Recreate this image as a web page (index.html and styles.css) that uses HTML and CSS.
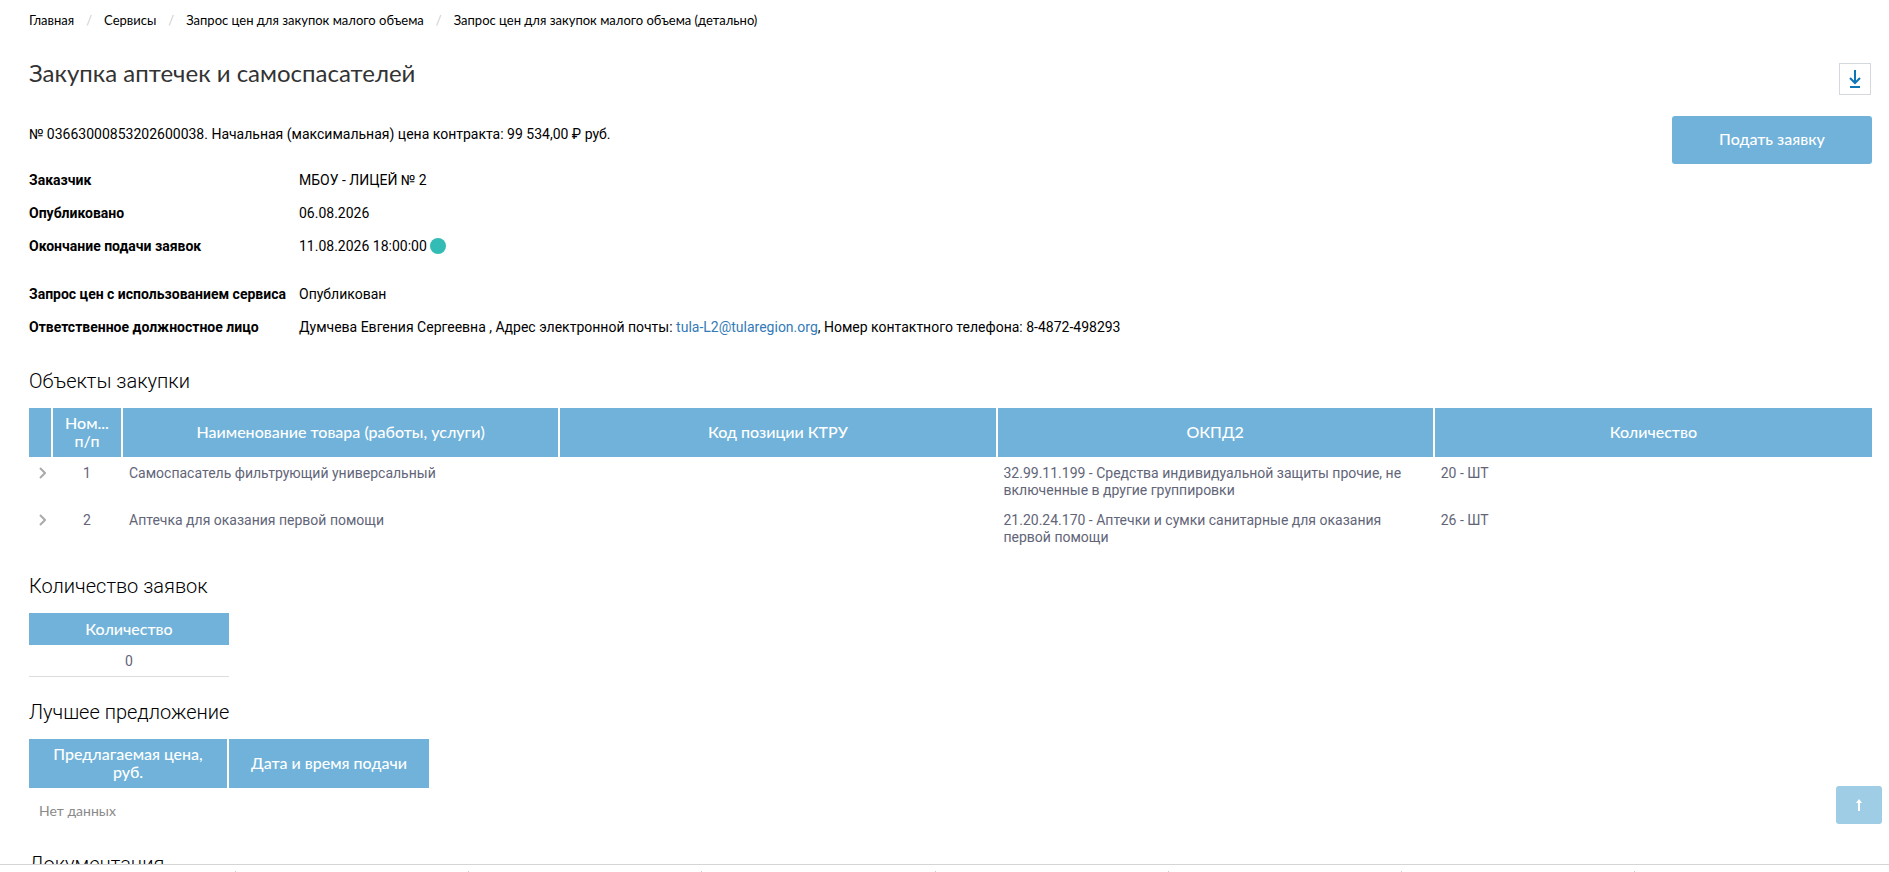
FILE: index.html
```html
<!DOCTYPE html>
<html lang="ru">
<head>
  <meta charset="UTF-8">
  <title>Закупка аптечек и самоспасателей</title>
  <link rel="stylesheet" href="styles.css">
</head>
<body>

<main class="page">
  <nav class="breadcrumbs">
    <a href="#">Главная</a>
    <a href="#">Сервисы</a>
    <a href="#">Запрос цен для закупок малого объема</a>
    <a href="#">Запрос цен для закупок малого объема (детально)</a>
  </nav>

  <header class="title-row">
    <h1>Закупка аптечек и самоспасателей</h1>
    <button class="download-btn" type="button" aria-label="Скачать">
      <svg viewBox="0 0 12 18" width="12" height="18">
        <path d="M6 0v13M1 8l5 5 5-5M1 17h10"/>
      </svg>
    </button>
  </header>

  <div class="summary">
    <div class="info">
      <p class="number">№ 03663000853202600038. Начальная (максимальная) цена контракта: 99 534,00 ₽ руб.</p>
      <dl>
        <dt>Заказчик</dt>
        <dd>МБОУ - ЛИЦЕЙ № 2</dd>
        <dt>Опубликовано</dt>
        <dd>06.08.2026</dd>
        <dt>Окончание подачи заявок</dt>
        <dd>11.08.2026 18:00:00 <span class="status-dot"></span></dd>
      </dl>
      <dl>
        <dt>Запрос цен с использованием сервиса</dt>
        <dd>Опубликован</dd>
        <dt>Ответственное должностное лицо</dt>
        <dd>Думчева Евгения Сергеевна , Адрес электронной почты: <a href="mailto:tula-L2@tularegion.org">tula-L2@tularegion.org</a>, Номер контактного телефона: 8-4872-498293</dd>
      </dl>
    </div>
    <button class="submit-btn" type="button">Подать заявку</button>
  </div>

  <h2>Объекты закупки</h2>
  <table class="grid objects">
    <colgroup>
      <col class="col-expand">
      <col class="col-num">
      <col><col><col><col>
    </colgroup>
    <thead>
      <tr>
        <th></th>
        <th>Ном... п/п</th>
        <th>Наименование товара (работы, услуги)</th>
        <th>Код позиции КТРУ</th>
        <th>ОКПД2</th>
        <th>Количество</th>
      </tr>
    </thead>
    <tbody>
      <tr>
        <td class="expand"><svg viewBox="0 0 7 12" width="7" height="12"><path d="M1 1l5 5-5 5"/></svg></td>
        <td class="center">1</td>
        <td>Самоспасатель фильтрующий универсальный</td>
        <td></td>
        <td>32.99.11.199 - Средства индивидуальной защиты прочие, не включенные в другие группировки</td>
        <td>20 - ШТ</td>
      </tr>
      <tr>
        <td class="expand"><svg viewBox="0 0 7 12" width="7" height="12"><path d="M1 1l5 5-5 5"/></svg></td>
        <td class="center">2</td>
        <td>Аптечка для оказания первой помощи</td>
        <td></td>
        <td>21.20.24.170 - Аптечки и сумки санитарные для оказания первой помощи</td>
        <td>26 - ШТ</td>
      </tr>
    </tbody>
  </table>

  <h2>Количество заявок</h2>
  <table class="grid count">
    <thead>
      <tr><th>Количество</th></tr>
    </thead>
    <tbody>
      <tr><td class="center">0</td></tr>
    </tbody>
  </table>

  <h2>Лучшее предложение</h2>
  <table class="grid offer">
    <thead>
      <tr>
        <th>Предлагаемая цена, руб.</th>
        <th>Дата и время подачи</th>
      </tr>
    </thead>
    <tbody>
      <tr><td class="empty" colspan="2">Нет данных</td></tr>
    </tbody>
  </table>

  <h2>Документация</h2>
</main>

<button class="to-top" type="button" aria-label="Наверх">
  <svg viewBox="0 0 6 12" width="6" height="12"><path d="M2 12V4H0l3-4 3 4H4v8z"/></svg>
</button>

<footer class="bottom-bar">
  <span></span><span></span><span></span><span></span><span></span><span></span><span></span><span></span>
</footer>

</body>
</html>
```
FILE: styles.css
```css
* {
  box-sizing: border-box;
}

body {
  display: flex;
  flex-direction: column;
  height: 100vh;
  margin: 0;
  overflow: hidden;
  background: #fff;
  color: #000;
  font-family: Roboto, "Liberation Sans", sans-serif;
  font-size: 14px;
  line-height: 17px;
}

.page {
  flex: 1;
  min-height: 0;
  overflow: hidden;
  padding: 12px 17px 0 29px;
}

.breadcrumbs {
  display: flex;
  font-family: Lato, sans-serif;
  font-size: 13px;
  line-height: 16px;
}

.breadcrumbs a {
  color: #000;
  text-decoration: none;
}

.breadcrumbs a + a::before {
  content: "/";
  padding: 0 12px;
  color: #ccc;
}

.title-row {
  display: flex;
  justify-content: space-between;
  margin-top: 31px;
}

h1 {
  margin: 0;
  color: #333;
  font-family: Lato, sans-serif;
  font-size: 24px;
  font-weight: 400;
  line-height: 28px;
}

.download-btn {
  display: flex;
  align-items: center;
  justify-content: center;
  width: 32px;
  height: 32px;
  margin: 4px 1px 0 0;
  padding: 0;
  border: 1px solid #d5d8dc;
  background: #fff;
  cursor: pointer;
}

.download-btn svg {
  fill: none;
  stroke: #0f75b5;
  stroke-width: 2;
}

.summary {
  display: flex;
  justify-content: space-between;
  align-items: flex-start;
  margin-top: 21px;
}

.number {
  margin: 10px 0 29px;
}

dl {
  display: grid;
  grid-template-columns: 270px 1fr;
  row-gap: 16px;
  margin: 0 0 31px;
}

dt {
  font-weight: 700;
}

dd {
  margin: 0;
}

dd a {
  color: #337ab7;
  text-decoration: none;
}

.info dl:last-child {
  margin-bottom: 10px;
}

.status-dot {
  display: inline-block;
  width: 16px;
  height: 16px;
  margin: -2px 0 0;
  border-radius: 50%;
  background: #33bbb5;
  vertical-align: middle;
}

.submit-btn {
  width: 200px;
  height: 48px;
  padding: 0 0 3px;
  border: none;
  border-radius: 3px;
  background: #70b2d9;
  color: #fff;
  font-family: Lato, sans-serif;
  font-size: 16px;
  font-weight: 500;
  cursor: pointer;
}

h2 {
  margin: 22px 0 14px;
  font-size: 20px;
  font-weight: 300;
  line-height: 26px;
}

.grid {
  border-collapse: separate;
  border-spacing: 0;
  table-layout: fixed;
}

.grid th {
  padding: 6px 8px 7px;
  border-right: 2px solid #fff;
  background: #70b2d9;
  color: #fff;
  font-family: Lato, sans-serif;
  font-size: 16px;
  font-weight: 500;
  line-height: 18px;
}

.grid td {
  padding: 8px 6px 5px;
  border-right: 2px solid transparent;
  color: #626578;
  vertical-align: top;
}

.grid th:last-child,
.grid td:last-child {
  border-right: none;
}

.grid .center {
  text-align: center;
}

.objects {
  width: 100%;
}

.col-expand {
  width: 24px;
}

.col-num {
  width: 70px;
}

.objects .expand {
  padding: 10px 0 0 10px;
  line-height: 12px;
}

.expand svg {
  display: block;
  fill: none;
  stroke: #aaa;
  stroke-width: 2;
}

.count {
  width: 200px;
}

.count th {
  height: 32px;
}

.count td {
  padding: 8px 6px 6px;
  border-bottom: 1px solid #ddd;
}

.offer {
  width: 400px;
}

.grid .empty {
  padding: 14px 10px 10px;
  color: #8a8a8a;
  font-family: Lato, sans-serif;
}

.to-top {
  position: fixed;
  right: 7px;
  bottom: 48px;
  display: flex;
  align-items: center;
  justify-content: center;
  width: 46px;
  height: 38px;
  border: none;
  border-radius: 3px;
  background: #a0cde6;
  cursor: pointer;
}

.to-top svg {
  fill: #fff;
}

.bottom-bar {
  display: flex;
  align-items: flex-end;
  height: 8px;
  padding: 0 22px 0 3px;
  border-top: 1px solid #d5d5d5;
  background: #fff;
}

.bottom-bar span {
  flex: 1;
  height: 1px;
  border-right: 1px solid #ccc;
}

.bottom-bar span:last-child {
  border-right: none;
}
```
